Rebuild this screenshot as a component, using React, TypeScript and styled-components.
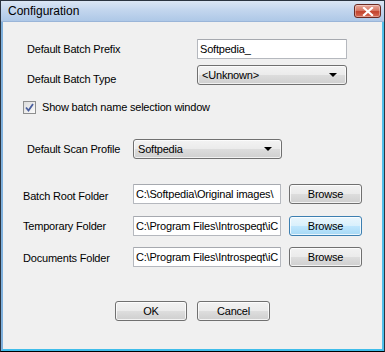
import React from "react";
import styled, { createGlobalStyle } from "styled-components";

const Global = createGlobalStyle`
  html, body { margin: 0; padding: 0; background: #f0f0f0; }
  body {
    font-family: "Liberation Sans", Arial, sans-serif;
    font-size: 11px;
    letter-spacing: -0.2px;
    color: #000;
  }
  * { box-sizing: border-box; }
`;

const Window = styled.div`
  width: 385px;
  height: 352px;
  border: 1px solid #2b3440;
  border-bottom-color: #000;
  display: flex;
  flex-direction: column;
  background: #f0f0f0;
  overflow: hidden;
`;

const TitleBar = styled.div`
  height: 21px;
  flex: none;
  display: flex;
  align-items: center;
  justify-content: space-between;
  padding: 0 3px 0 7px;
  background: linear-gradient(#dbe6f4, #c3d6ee 45%, #aec8e7);
  border-bottom: 1px solid #9ab5d8;
`;

const Title = styled.span`
  font-size: 12px;
  letter-spacing: 0;
  color: #000;
`;

const CloseButton = styled.div`
  width: 27px;
  height: 14px;
  border: 1px solid #6b2a22;
  border-radius: 3px;
  background: linear-gradient(#e9a99b, #d87a66 45%, #c2432d 55%, #d76b55);
  display: flex;
  align-items: center;
  justify-content: center;
  box-shadow: inset 0 0 0 1px rgba(255, 255, 255, 0.35);
`;

const Frame = styled.div`
  flex: 1;
  display: flex;
  flex-direction: column;
  border-left: 2px solid #7fb0dc;
  border-right: 2px solid #4fbfea;
  border-bottom: 2px solid #3fbdea;
`;

const Row = styled.div<{ $top: number; $indent: number; $h?: number }>`
  display: flex;
  align-items: center;
  margin-top: ${(p) => p.$top}px;
  padding-left: ${(p) => p.$indent}px;
  height: ${(p) => p.$h ?? 20}px;
`;

const Label = styled.span<{ $w: number; $dy?: number }>`
  width: ${(p) => p.$w}px;
  flex: none;
  white-space: nowrap;
  margin-top: ${(p) => (p.$dy ?? 0) * 2}px;
`;

const TextField = styled.div<{ $w: number }>`
  width: ${(p) => p.$w}px;
  height: 20px;
  flex: none;
  background: #fff;
  border: 1px solid #b5b8be;
  border-top-color: #a6a9af;
  border-radius: 1px;
  padding: 0 2px;
  display: flex;
  align-items: center;
  overflow: hidden;
  white-space: nowrap;
`;

const Combo = styled.div<{ $w: number }>`
  width: ${(p) => p.$w}px;
  height: 20px;
  flex: none;
  border: 1px solid #707070;
  border-radius: 3px;
  background: linear-gradient(#f3f3f3, #ebebeb 48%, #dcdcdc 52%, #cfcfcf);
  box-shadow: inset 0 0 0 1px rgba(255, 255, 255, 0.7);
  display: flex;
  align-items: center;
  justify-content: space-between;
  padding: 0 9px 0 4px;
`;

const Arrow = styled.span`
  width: 0;
  height: 0;
  border-left: 4px solid transparent;
  border-right: 4px solid transparent;
  border-top: 4px solid #000;
`;

const Button = styled.div<{ $w: number; $focus?: boolean; $gap?: number }>`
  width: ${(p) => p.$w}px;
  height: 20px;
  flex: none;
  margin-left: ${(p) => p.$gap ?? 0}px;
  border: 1px solid ${(p) => (p.$focus ? "#3c7fb1" : "#707070")};
  border-radius: 3px;
  background: ${(p) =>
    p.$focus
      ? "linear-gradient(#eaf6fd, #d9f0fc 48%, #bee6fd 52%, #a7d9f5)"
      : "linear-gradient(#f2f2f2, #ebebeb 48%, #dddddd 52%, #cfcfcf)"};
  box-shadow: inset 0 0 0 1px rgba(255, 255, 255, 0.75);
  display: flex;
  align-items: center;
  justify-content: center;
`;

const CheckBox = styled.div`
  width: 13px;
  height: 13px;
  flex: none;
  border: 1px solid #8e8f8f;
  background: linear-gradient(135deg, #dcdcdc, #fbfbfb);
  display: flex;
  align-items: center;
  justify-content: center;
  margin-right: 6px;
`;

const FooterRow = styled.div`
  display: flex;
  justify-content: center;
  gap: 10px;
  margin-top: 34px;
  height: 21px;
`;

const folders = [
  { label: "Batch Root Folder", value: "C:\\Softpedia\\Original images\\", top: 25, dy: 2 },
  { label: "Temporary Folder", value: "C:\\Program Files\\Introspeqt\\iC", top: 12, focus: true, dy: 0 },
  { label: "Documents Folder", value: "C:\\Program Files\\Introspeqt\\iC", top: 11, dy: 1 },
];

export default function App() {
  return (
    <>
      <Global />
      <Window>
        <TitleBar>
          <Title>Configuration</Title>
          <CloseButton>
            <svg width="12" height="9" viewBox="0 0 12 9">
              <path d="M2 1 L10 8 M10 1 L2 8" stroke="#fff" strokeWidth="2.2" strokeLinecap="square" />
            </svg>
          </CloseButton>
        </TitleBar>
        <Frame>
          <Row $top={17} $indent={24}>
            <Label $w={170}>Default Batch Prefix</Label>
            <TextField $w={150}>Softpedia_</TextField>
          </Row>
          <Row $top={6} $indent={24}>
            <Label $w={170} $dy={3.5}>Default Batch Type</Label>
            <Combo $w={150}>
              <span>&lt;Unknown&gt;</span>
              <Arrow />
            </Combo>
          </Row>
          <Row $top={15} $indent={20} $h={14}>
            <CheckBox>
              <svg width="9" height="9" viewBox="0 0 9 9">
                <path d="M1 4.5 L3.5 7.5 L8 1" stroke="#4a5f9e" strokeWidth="1.8" fill="none" />
              </svg>
            </CheckBox>
            <span>Show batch name selection window</span>
          </Row>
          <Row $top={25} $indent={24}>
            <Label $w={106}>Default Scan Profile</Label>
            <Combo $w={149}>
              <span>Softpedia</span>
              <Arrow />
            </Combo>
          </Row>
          {folders.map((f) => (
            <Row key={f.label} $top={f.top} $indent={20}>
              <Label $w={110} $dy={f.dy}>{f.label}</Label>
              <TextField $w={148}>{f.value}</TextField>
              <Button $w={73} $focus={f.focus} $gap={8}>
                Browse
              </Button>
            </Row>
          ))}
          <FooterRow>
            <Button $w={72}>OK</Button>
            <Button $w={73}>Cancel</Button>
          </FooterRow>
        </Frame>
      </Window>
    </>
  );
}
